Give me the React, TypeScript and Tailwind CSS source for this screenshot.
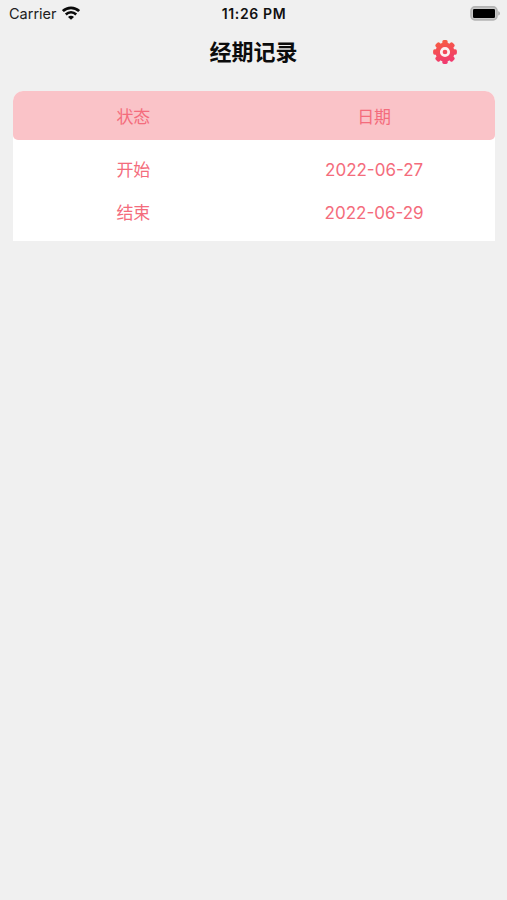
import React from 'react';

interface PeriodRecord {
  id: number;
  status: string;
  date: string;
}

const records: PeriodRecord[] = [
  { id: 1, status: '开始', date: '2022-06-27' },
  { id: 2, status: '结束', date: '2022-06-29' },
];

const toothAngles = [0, 45, 90, 135, 180, 225, 270, 315];

const WifiIcon: React.FC = () => (
  <svg className="w-[18px] h-[14px] mb-[2px]" viewBox="0 0 18 14" fill="none" stroke="#0a0a0a">
    <path d="M0.9 5.1a11.6 11.6 0 0 1 16.2 0" strokeWidth="2.7" />
    <path d="M3.8 8.5a7.3 7.3 0 0 1 10.4 0" strokeWidth="2.5" />
    <path d="M9 13.8 6 10.9a4.2 4.2 0 0 1 6 0Z" fill="#0a0a0a" stroke="none" />
  </svg>
);

const BatteryIcon: React.FC = () => (
  <svg className="w-[31px] h-[15px] mb-[2px]" viewBox="0 0 31 15">
    <rect x="1" y="0.9" width="26" height="13" rx="3.8" fill="#c9c9c9" stroke="#b4b4b4" strokeWidth="1.6" />
    <rect x="3" y="3" width="22" height="9" rx="1.2" fill="#000" />
    <path d="M28.3 5.2c2 .6 2 3.8 0 4.4Z" fill="#a3a3a3" />
  </svg>
);

const GearIcon: React.FC = () => (
  <svg className="w-6 h-6" viewBox="-12 -12 24 24">
    <defs>
      <linearGradient id="gear" gradientUnits="userSpaceOnUse" x1="-3" y1="-12" x2="3" y2="12">
        <stop offset="0" stopColor="#f75c41" />
        <stop offset="1" stopColor="#f03873" />
      </linearGradient>
      <mask id="teeth" maskUnits="userSpaceOnUse" x="-12" y="-12" width="24" height="24">
        <circle r="9.6" fill="#fff" />
        {toothAngles.map((angle) => (
          <rect
            key={angle}
            x="-2.7"
            y="-11.9"
            width="5.4"
            height="6"
            rx="1.6"
            fill="#fff"
            transform={`rotate(${angle})`}
          />
        ))}
      </mask>
    </defs>
    <rect x="-12" y="-12" width="24" height="24" fill="url(#gear)" mask="url(#teeth)" />
    <circle r="3.7" fill="none" stroke="#fbf1f2" strokeWidth="2.7" />
  </svg>
);

const StatusBar: React.FC = () => (
  <div className="grid grid-cols-3 items-center h-7 pl-[7px] pr-[6px]">
    <div className="flex items-center gap-[5px] pl-[2px]">
      <span className="text-[14.5px] leading-5 text-[#202020]">Carrier</span>
      <WifiIcon />
    </div>
    <span className="text-center text-[14px] leading-5 font-semibold tracking-[0.65px] text-[#111]">
      11:26 PM
    </span>
    <div className="flex justify-end">
      <BatteryIcon />
    </div>
  </div>
);

const App: React.FC = () => {
  return (
    <div className="min-h-screen bg-[#f0f0f0] font-['Inter','Noto_Sans_CJK_SC',sans-serif]">
      <StatusBar />

      <header className="grid grid-cols-[1fr_auto_1fr] items-center h-12 px-[50px]">
        <h1 className="col-start-2 text-[22px] leading-8 font-bold text-[#0c0c0c]">经期记录</h1>
        <button type="button" className="justify-self-end" aria-label="设置">
          <GearIcon />
        </button>
      </header>

      <main className="mt-[15px] ml-[13px] mr-[12.5px]">
        <section className="rounded-t-[10px] bg-white text-[17px] leading-6 text-[#f46c7c] pb-[7px]">
          <div className="grid grid-cols-2 items-center h-[49px] pt-[2px] rounded-t-[10px] rounded-b-[5px] bg-[#fac3c8] text-center">
            <span>状态</span>
            <span>日期</span>
          </div>
          <div className="pt-[9px]">
            {records.map((record) => (
              <div key={record.id} className="grid grid-cols-2 items-center h-[42.5px] text-center">
                <span>{record.status}</span>
                <span>{record.date}</span>
              </div>
            ))}
          </div>
        </section>
      </main>
    </div>
  );
};

export default App;
